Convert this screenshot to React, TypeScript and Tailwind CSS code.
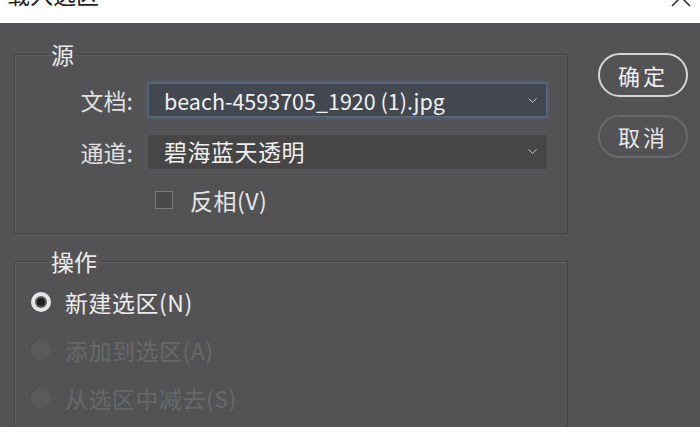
import { ChevronDown } from 'lucide-react';

const font = { fontFamily: '"Noto Sans CJK SC", "Noto Sans", sans-serif' };

function Radio({ checked, label, disabled }: { checked?: boolean; label: string; disabled?: boolean }) {
  return (
    <div className="flex items-center h-[48px] gap-[14px]">
      {checked ? (
        <span className="w-[20px] h-[20px] rounded-full bg-[#e6e6e6] flex items-center justify-center">
          <span className="w-[8px] h-[8px] rounded-full bg-[#1e1e1e] ring-2 ring-[#5a5a5a]" />
        </span>
      ) : (
        <span className="w-[20px] h-[20px] rounded-full bg-[#5a5a5c]" />
      )}
      <span className={disabled ? 'text-[#68686a] tracking-[0.5px]' : 'text-[#ececec] tracking-[0.5px]'}>{label}</span>
    </div>
  );
}

function Select({ value, focused, latin }: { value: string; focused?: boolean; latin?: boolean }) {
  return (
    <div
      className={
        'w-[399px] h-[34px] flex items-center justify-between pl-[15px] pr-[6px] ' +
        (focused
          ? 'bg-[#434850] border border-[#5b6a80] shadow-[0_0_5px_#5b6f8c]'
          : 'bg-[#464646] border border-[#4a4a4a]')
      }
    >
      <span className={'text-[#f0f0f0] leading-none ' + (latin ? 'text-[21.5px]' : 'text-[23px] tracking-[0.5px]')}>
        {value}
      </span>
      <ChevronDown size={15} strokeWidth={1.6} className="text-[#c8c8c8]" />
    </div>
  );
}

export default function App() {
  return (
    <div className="w-[700px] h-[427px] overflow-hidden bg-[#535355] text-[23px]" style={font}>
      <div className="h-[23px] bg-white flex justify-between items-start overflow-hidden">
        <span className="text-[23px] leading-none text-[#222] ml-[7px] mt-[-17px]">载入选区</span>
        <svg width="20" height="20" viewBox="0 0 20 20" className="mr-[9px] mt-[-13px]">
          <path d="M1 1 L19 19 M19 1 L1 19" stroke="#333" strokeWidth="1.6" fill="none" />
        </svg>
      </div>

      <div className="flex pl-[14px] pt-[20px]">
        <div className="w-[554px] flex flex-col gap-[16px]">
          <fieldset className="border border-[#454547] shadow-[inset_1px_1px_0_#5e5e60] p-0 pb-[21px]">
            <legend className="ml-[33px] px-[3px] leading-[22px] text-[#ececec]">源</legend>
            <div className="flex flex-col gap-[17px] mt-[18px]">
              <div className="flex items-center">
                <span className="w-[120px] text-right pr-[2px] text-[#e0e0e0]">文档:</span>
                <div className="ml-[13px]">
                  <Select value="beach-4593705_1920 (1).jpg" focused latin />
                </div>
              </div>
              <div className="flex items-center">
                <span className="w-[120px] text-right pr-[2px] text-[#e0e0e0]">通道:</span>
                <div className="ml-[13px]">
                  <Select value="碧海蓝天透明" />
                </div>
              </div>
            </div>
            <div className="flex items-center h-[24px] mt-[19px] ml-[140px] gap-[17px]">
              <span className="w-[18px] h-[18px] border-[1.5px] border-[#7a7a7c] bg-[#4a4a4c]" />
              <span className="text-[#e6e6e6] tracking-[0.5px]">反相(V)</span>
            </div>
          </fieldset>

          <fieldset className="border border-[#454547] shadow-[inset_1px_1px_0_#5e5e60] p-0 pl-[16px] h-[200px]">
            <legend className="ml-[17px] px-[3px] leading-[22px] text-[#ececec]">操作</legend>
            <div className="flex flex-col mt-[6px]">
              <Radio checked label="新建选区(N)" />
              <Radio disabled label="添加到选区(A)" />
              <Radio disabled label="从选区中减去(S)" />
            </div>
          </fieldset>
        </div>

        <div className="ml-[30px] mt-[10px] flex flex-col gap-[18px] w-[90px]">
          <button className="h-[44px] rounded-full border-2 border-[#d6d6d6] text-[#f0f0f0] text-[22px] tracking-[3px]">
            确定
          </button>
          <button className="h-[43px] rounded-full border-2 border-[#6a6a6c] text-[#e6e6e6] text-[22px] tracking-[3px]">
            取消
          </button>
        </div>
      </div>
    </div>
  );
}
